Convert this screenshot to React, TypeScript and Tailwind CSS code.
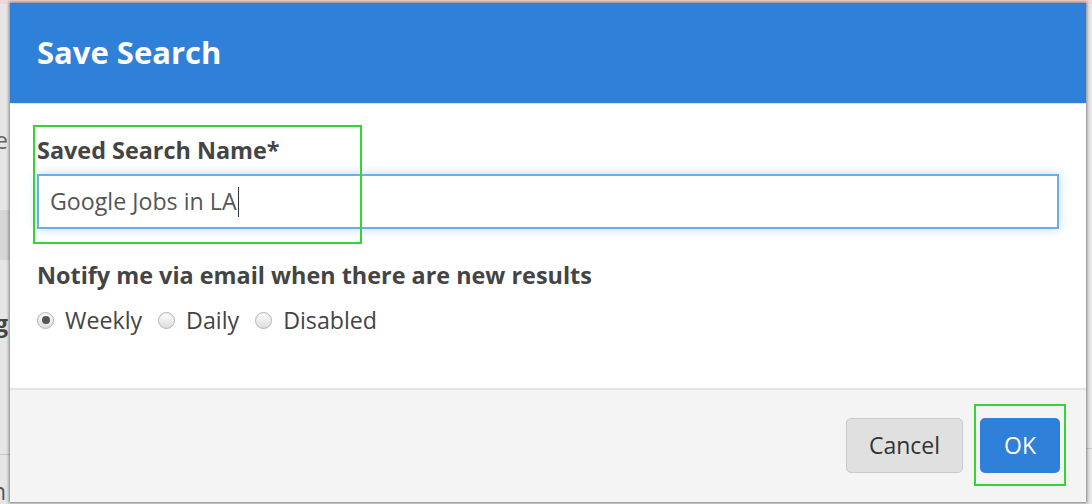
import { useState } from "react";

export default function App() {
  const [freq, setFreq] = useState("weekly");
  const font = { fontFamily: '"Open Sans", "Noto Sans", sans-serif' };

  return (
    <div className="relative w-[1092px] h-[504px] overflow-hidden bg-[#e6e6e6]" style={font}>
      {/* Page behind the modal */}
      <div className="absolute inset-x-0 top-0 h-[4px] bg-[#f1d6d8]" />
      <div className="absolute left-0 top-[210px] w-[12px] h-[50px] bg-[#d6d6d6]" />
      <div className="absolute left-0 top-[454px] w-[12px] h-px bg-[#c8c8c8]" />
      <div className="absolute right-0 top-[448px] w-[8px] h-px bg-[#c8c8c8]" />
      <div className="absolute left-[-5px] top-[123px] text-[23px] text-[#666]">e</div>
      <div className="absolute left-[-5px] top-[306px] text-[23px] font-bold text-[#444]">g</div>
      <div className="absolute left-[-8px] top-[474px] text-[23px] text-[#555]">n</div>

      {/* Modal */}
      <div className="relative z-10 ml-[10px] mt-[3px] w-[1076px] h-[499px] flex flex-col bg-white shadow-[0_0_3px_1px_rgba(0,0,0,0.45)]">
        <div className="h-[100px] bg-[#2f80d9] flex items-center px-[27px]">
          <h1 className="text-[31px] font-bold text-white leading-none pb-[2px]">Save Search</h1>
        </div>

        <div className="h-[285px] border-t border-[#d9e6f3] px-[27px] pt-[30px]">
          <div className="relative">
            <label className="block text-[23.4px] font-bold text-[#444] leading-[32px]">Saved Search Name*</label>
            <div className="mt-[8px] h-[55px] border-2 border-[#6aaee6] shadow-[0_0_10px_rgba(102,175,233,0.45)] flex items-center px-[11px]">
              <span className="text-[23.2px] text-[#555]">Google Jobs in LA</span>
              <span className="w-px h-[30px] bg-[#333] ml-[1px]" />
            </div>
            <div className="absolute left-[-4px] top-[-9px] w-[329px] h-[119px] border-2 border-[#33d433] pointer-events-none" />
          </div>

          <div className="mt-[30px] text-[23.4px] font-bold text-[#444] leading-[32px]">
            Notify me via email when there are new results
          </div>
          <div className="mt-[13px] flex items-center text-[23.2px] text-[#444]">
            {[
              { id: "weekly", label: "Weekly" },
              { id: "daily", label: "Daily" },
              { id: "disabled", label: "Disabled" },
            ].map(r => (
              <button key={r.id} onClick={() => setFreq(r.id)} className="flex items-center mr-[16px]">
                <span className="w-[17px] h-[17px] rounded-full border border-[#b5b5b5] bg-gradient-to-b from-[#ffffff] to-[#dcdcdc] flex items-center justify-center shadow-[inset_0_1px_1px_rgba(0,0,0,0.08)]">
                  {freq === r.id && <span className="w-[8px] h-[8px] rounded-full bg-[#555]" />}
                </span>
                <span className="ml-[11px] leading-[32px]">{r.label}</span>
              </button>
            ))}
          </div>
        </div>

        <div className="flex-1 bg-[#f4f4f4] border-t-2 border-[#e4e4e4] flex items-center justify-end pr-[26px] gap-[17px] pb-[2px]">
          <button className="w-[117px] h-[55px] rounded-[5px] bg-[#e0e0e0] border border-[#c9c9c9] text-[23px] text-[#333]">
            Cancel
          </button>
          <div className="relative">
            <button className="w-[80px] h-[55px] rounded-[5px] bg-[#2f80d9] text-[23px] text-white">OK</button>
            <div className="absolute left-[-6px] top-[-14px] w-[92px] h-[82px] border-2 border-[#33d433] pointer-events-none" />
          </div>
        </div>
      </div>
    </div>
  );
}
